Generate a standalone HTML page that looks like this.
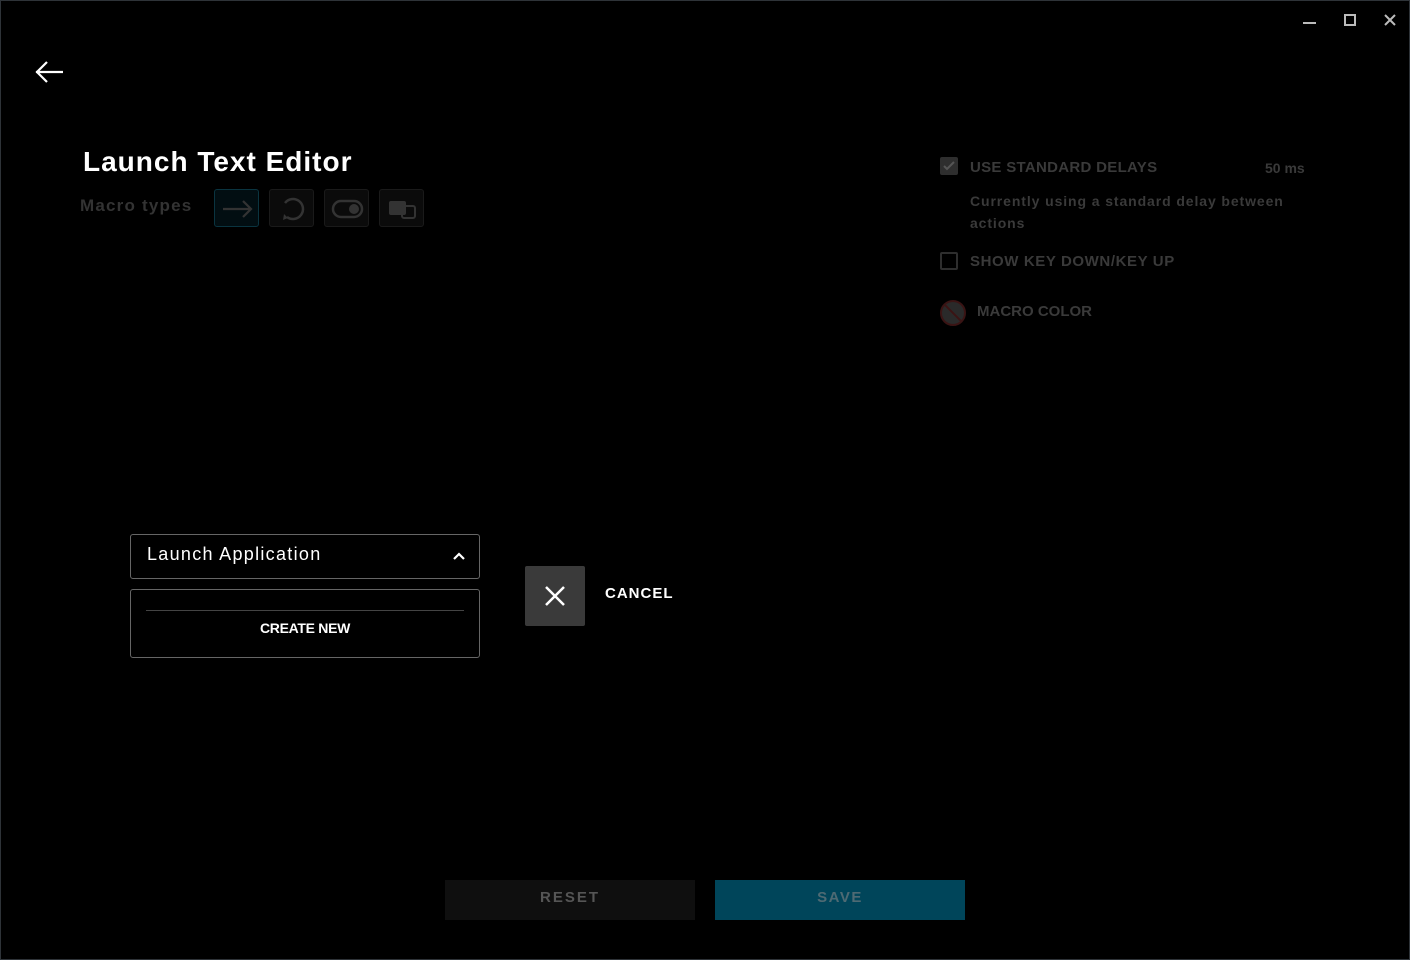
<!DOCTYPE html>
<html><head><meta charset="utf-8"><style>
*{margin:0;padding:0;box-sizing:border-box}
body{width:1410px;height:960px;background:#000;font-family:"Liberation Sans",sans-serif;position:relative;overflow:hidden;box-shadow:inset 0 0 0 1px #2e3338}
.a{position:absolute}
.t{color:#fff}
.g{color:#3a3a3a;font-weight:bold}
.ib{position:absolute;top:189px;width:45px;height:38px;border:1px solid #1a1a1a;border-radius:3px;background:#0b0b0b}
</style></head><body>
<svg class="a" style="left:1302px;top:12px" width="100" height="20">
<line x1="1" y1="11" x2="14" y2="11" stroke="#bbb" stroke-width="2"/>
<rect x="43" y="3" width="10" height="10" fill="none" stroke="#bbb" stroke-width="2"/>
<path d="M83 3l10 10M93 3l-10 10" stroke="#bbb" stroke-width="2"/>
</svg>
<svg class="a" style="left:34px;top:60px" width="32" height="24"><path d="M2 12H29M13 2L3 12L13 22" stroke="#fff" stroke-width="2.2" fill="none"/></svg>
<div class="a t" style="left:83px;top:146px;font-size:28px;font-weight:bold;letter-spacing:1px">Launch Text Editor</div>
<div class="a g" style="left:80px;top:196px;font-size:17px;letter-spacing:1.2px;color:#333">Macro types</div>
<div class="ib" style="left:214px;border-color:#0a3440;background:#020e12"><svg width="45" height="38"><path d="M8 19H36M28 11L36 19L28 27" stroke="#333" stroke-width="2.2" fill="none"/></svg></div>
<div class="ib" style="left:269px"><svg width="45" height="38"><path d="M17 27A10 10 0 1 0 15 13" stroke="#333" stroke-width="2.5" fill="none"/><path d="M14 24l4 4-5 2z" fill="#333"/></svg></div>
<div class="ib" style="left:324px"><svg width="45" height="38"><rect x="8" y="11" width="29" height="16" rx="8" fill="none" stroke="#333" stroke-width="2.5"/><circle cx="29" cy="19" r="5" fill="#333"/></svg></div>
<div class="ib" style="left:379px"><svg width="45" height="38"><rect x="9" y="11" width="17" height="14" rx="2" fill="#333"/><rect x="22" y="16" width="13" height="12" rx="2" fill="none" stroke="#333" stroke-width="2"/></svg></div>

<div class="a" style="left:940px;top:157px;width:18px;height:18px;background:#2e2e2e;border-radius:2px"><svg width="18" height="18"><path d="M4 9l3 3 7-7" stroke="#555" stroke-width="2" fill="none"/></svg></div>
<div class="a g" style="left:970px;top:159px;font-size:15px;letter-spacing:0.3px">USE STANDARD DELAYS</div>
<div class="a g" style="left:1265px;top:160px;font-size:14px">50 ms</div>
<div class="a g" style="left:970px;top:190px;font-size:14px;line-height:22px;width:345px;letter-spacing:0.9px">Currently using a standard delay between actions</div>
<div class="a" style="left:940px;top:252px;width:18px;height:18px;border:2px solid #2e2e2e;border-radius:2px"></div>
<div class="a g" style="left:970px;top:253px;font-size:15px;letter-spacing:0.6px">SHOW KEY DOWN/KEY UP</div>
<svg class="a" style="left:939px;top:299px" width="28" height="28"><circle cx="14" cy="14" r="12" fill="#2a2a2a" stroke="#3a1414" stroke-width="2"/><line x1="6" y1="6" x2="22" y2="22" stroke="#3a1414" stroke-width="2"/></svg>
<div class="a g" style="left:977px;top:303px;font-size:15px">MACRO COLOR</div>

<div class="a" style="left:130px;top:534px;width:350px;height:45px;border:1px solid #666;border-radius:3px"></div>
<div class="a t" style="left:147px;top:544px;font-size:18px;letter-spacing:1.3px">Launch Application</div>
<svg class="a" style="left:452px;top:550px" width="14" height="12"><path d="M2 9l5-5 5 5" stroke="#fff" stroke-width="2.2" fill="none"/></svg>
<div class="a" style="left:130px;top:589px;width:350px;height:69px;border:1px solid #666;border-radius:3px"></div>
<div class="a" style="left:146px;top:610px;width:318px;height:1px;background:#444"></div>
<div class="a t" style="left:130px;top:620px;width:350px;text-align:center;font-size:14px;font-weight:bold;letter-spacing:-0.3px">CREATE NEW</div>
<div class="a" style="left:525px;top:566px;width:60px;height:60px;background:#3a3a3a;border-radius:2px"><svg width="60" height="60"><path d="M21 21l18 18M39 21L21 39" stroke="#fff" stroke-width="2.5"/></svg></div>
<div class="a t" style="left:605px;top:585px;font-size:15px;font-weight:bold;letter-spacing:1px">CANCEL</div>

<div class="a" style="left:445px;top:880px;width:250px;height:40px;background:#0f0f0f;color:#555;font-weight:bold;font-size:15px;letter-spacing:2px;text-align:center;line-height:36px">RESET</div>
<div class="a" style="left:715px;top:880px;width:250px;height:40px;background:#00455a;color:#4e6a73;font-weight:bold;font-size:15px;letter-spacing:1.5px;text-align:center;line-height:36px">SAVE</div>
</body></html>
